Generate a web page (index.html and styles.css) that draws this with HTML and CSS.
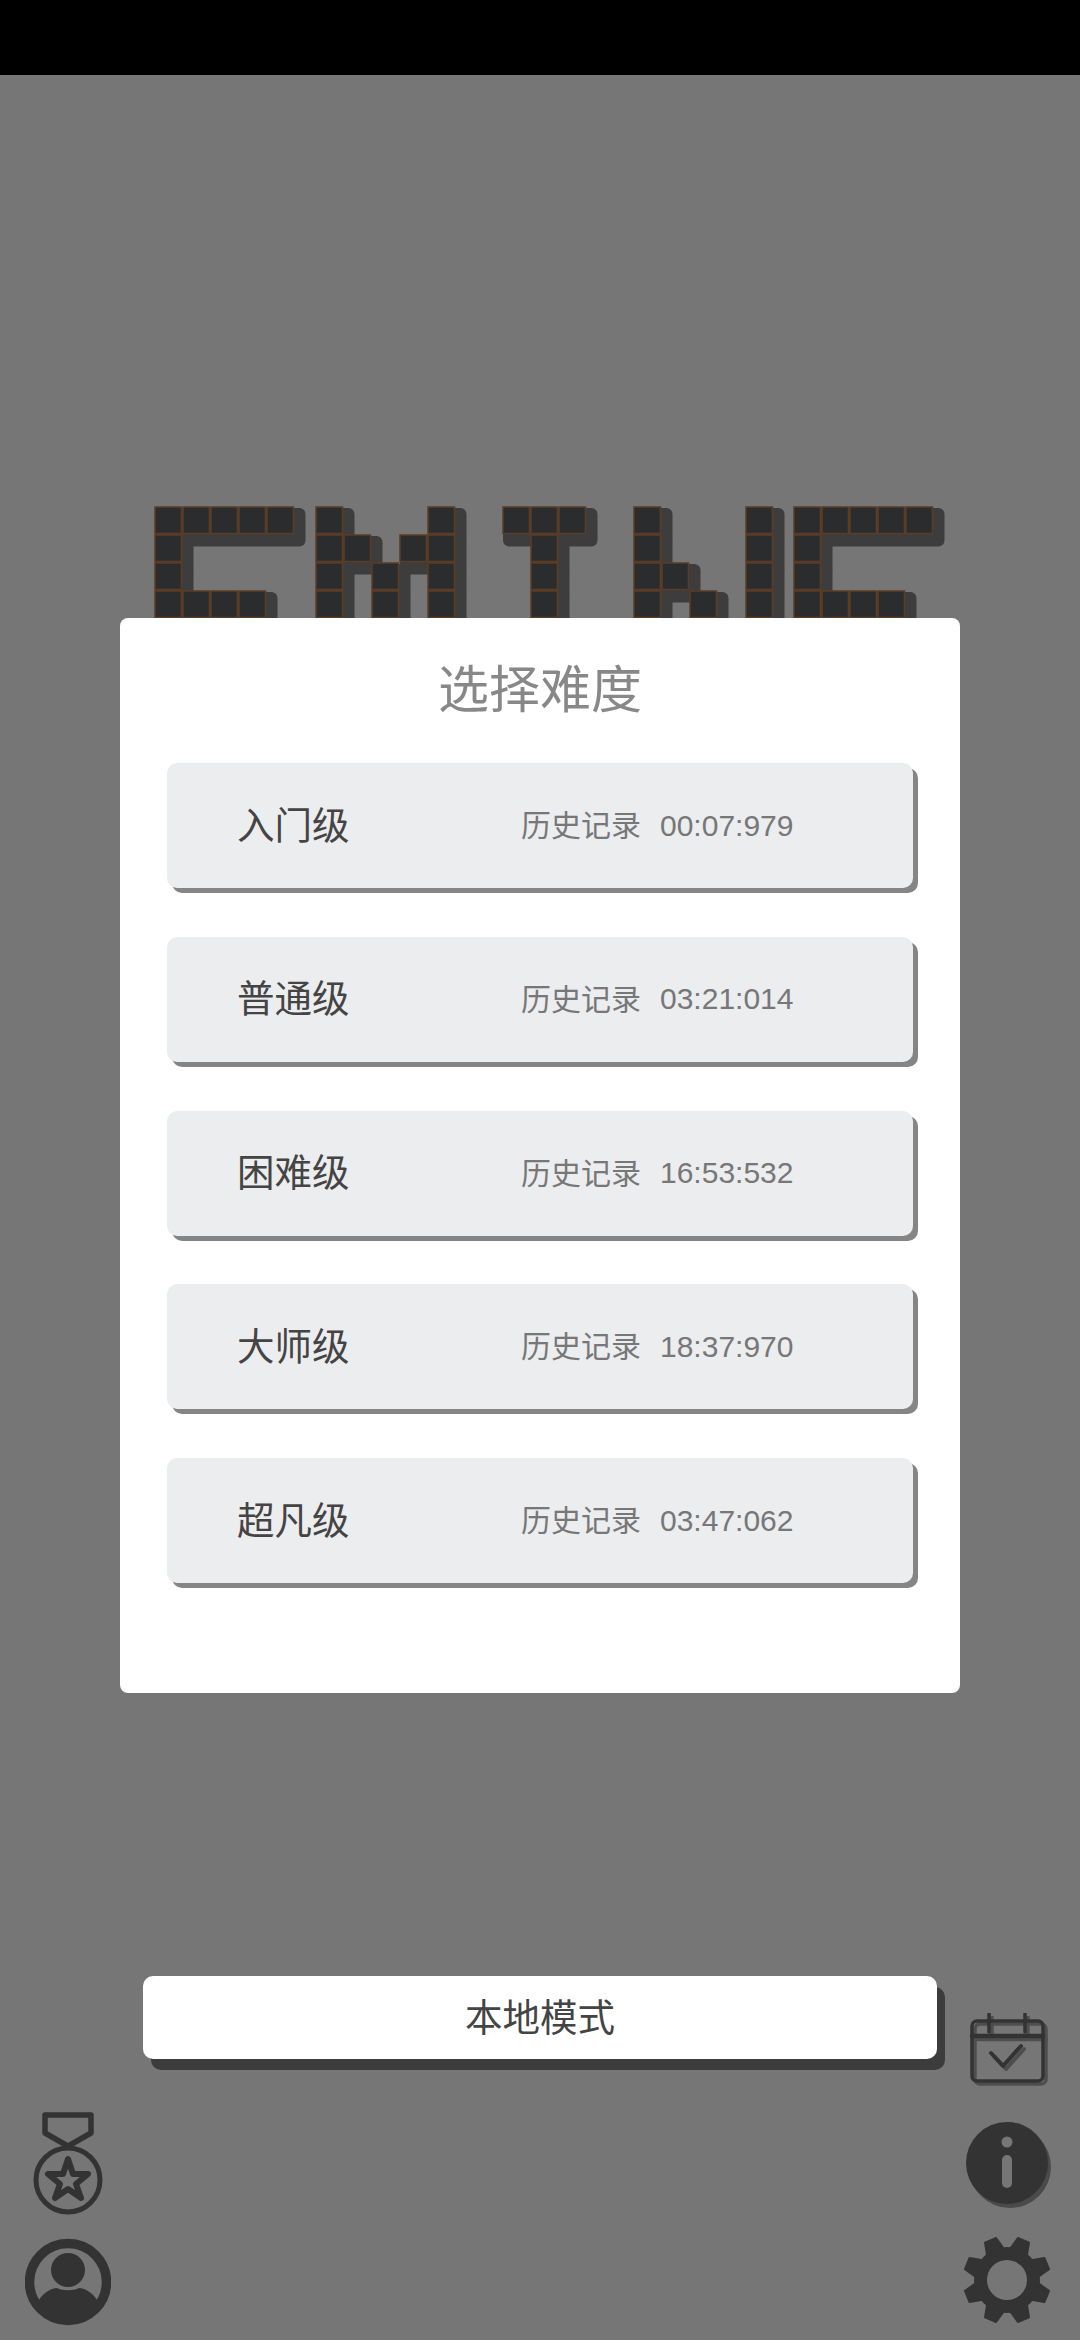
FILE: index.html
```html
<!DOCTYPE html>
<html lang="zh-CN">
<head>
    <meta charset="UTF-8">
    <meta name="viewport" content="width=device-width, initial-scale=1.0">
    <title>选择难度</title>
    <link rel="stylesheet" href="styles.css">
</head>
<body>
    <div class="status-bar"></div>

    <!-- game logo, made of tiles; the dialog covers its lower part -->
    <div class="logo-area">
        <svg class="logo" width="1080" height="120" viewBox="0 0 1080 120">
            <defs>
                <rect id="tile" width="26.5" height="26.5"/>
                <g id="tiles">
                    <use href="#tile" x="155" y="1"/><use href="#tile" x="183" y="1"/><use href="#tile" x="211" y="1"/><use href="#tile" x="239" y="1"/><use href="#tile" x="267" y="1"/>
                    <use href="#tile" x="155" y="29"/><use href="#tile" x="155" y="57"/>
                    <use href="#tile" x="155" y="85"/><use href="#tile" x="183" y="85"/><use href="#tile" x="211" y="85"/><use href="#tile" x="239" y="85"/>

                    <use href="#tile" x="316" y="1"/><use href="#tile" x="316" y="29"/><use href="#tile" x="316" y="57"/><use href="#tile" x="316" y="85"/>
                    <use href="#tile" x="344" y="29"/>
                    <use href="#tile" x="372" y="57"/><use href="#tile" x="372" y="85"/>
                    <use href="#tile" x="400" y="29"/>
                    <use href="#tile" x="428" y="1"/><use href="#tile" x="428" y="29"/><use href="#tile" x="428" y="57"/><use href="#tile" x="428" y="85"/>

                    <use href="#tile" x="503" y="1"/><use href="#tile" x="531" y="1"/><use href="#tile" x="559" y="1"/>
                    <use href="#tile" x="531" y="29"/><use href="#tile" x="531" y="57"/><use href="#tile" x="531" y="85"/>

                    <use href="#tile" x="634" y="1"/><use href="#tile" x="634" y="29"/><use href="#tile" x="634" y="57"/><use href="#tile" x="634" y="85"/>
                    <use href="#tile" x="662" y="57"/><use href="#tile" x="690" y="85"/>

                    <use href="#tile" x="746" y="1"/><use href="#tile" x="746" y="29"/><use href="#tile" x="746" y="57"/><use href="#tile" x="746" y="85"/>

                    <use href="#tile" x="794" y="1"/><use href="#tile" x="822" y="1"/><use href="#tile" x="850" y="1"/><use href="#tile" x="878" y="1"/><use href="#tile" x="906" y="1"/>
                    <use href="#tile" x="794" y="29"/><use href="#tile" x="794" y="57"/>
                    <use href="#tile" x="794" y="85"/><use href="#tile" x="822" y="85"/><use href="#tile" x="850" y="85"/><use href="#tile" x="878" y="85"/>
                </g>
            </defs>
            <use href="#tiles" class="logo-shadow" transform="translate(6 7)"/>
            <use href="#tiles" class="logo-tile"/>
        </svg>
    </div>

    <div class="modal">
        <h2 class="modal-title">选择难度</h2>
        <div class="level-list">
            <div class="level-row">
                <span class="level-name">入门级</span>
                <span class="level-history">历史记录</span>
                <span class="level-time">00:07:979</span>
            </div>
            <div class="level-row">
                <span class="level-name">普通级</span>
                <span class="level-history">历史记录</span>
                <span class="level-time">03:21:014</span>
            </div>
            <div class="level-row">
                <span class="level-name">困难级</span>
                <span class="level-history">历史记录</span>
                <span class="level-time">16:53:532</span>
            </div>
            <div class="level-row">
                <span class="level-name">大师级</span>
                <span class="level-history">历史记录</span>
                <span class="level-time">18:37:970</span>
            </div>
            <div class="level-row">
                <span class="level-name">超凡级</span>
                <span class="level-history">历史记录</span>
                <span class="level-time">03:47:062</span>
            </div>
        </div>
    </div>

    <div class="footer">
        <div class="footer-left">
            <!-- medal -->
            <svg class="icon-medal" width="70" height="104" viewBox="0 0 70 104">
                <path d="M33 33 L12 21 V3 H58 V21 L37 33" class="line-icon" stroke-width="5.5"/>
                <circle cx="35" cy="68" r="32" class="line-icon" stroke-width="5"/>
                <path d="M35 47 L40 62 L55 62 L43 72 L48 86 L35 77 L22 86 L27 72 L15 62 L30 62 Z" class="line-icon" stroke-width="6"/>
            </svg>
            <!-- profile -->
            <svg class="icon-user" width="86" height="88" viewBox="0 0 86 88">
                <circle cx="43" cy="44" r="38.5" class="line-icon" stroke-width="9.5"/>
                <circle cx="43" cy="32" r="17" class="solid-icon"/>
                <path d="M14 62 C18 55 26 50 32 50 C37 53 49 53 54 50 C60 50 68 55 72 62 A34 34 0 0 1 14 62 Z" class="solid-icon"/>
            </svg>
        </div>

        <button class="local-btn">本地模式</button>

        <div class="footer-right">
            <!-- calendar -->
            <svg class="icon-calendar" width="80" height="76" viewBox="0 0 80 76">
                <rect x="3" y="8" width="71" height="60" rx="5" class="line-icon" stroke-width="3.5"/>
                <path d="M3 23 H74" class="line-icon" stroke-width="4.5"/>
                <path d="M20 1 V19 M56 1 V19" class="line-icon" stroke-width="3.5"/>
                <path d="M22 40 L34 53 L52 33" class="line-icon" stroke-width="4"/>
            </svg>
            <!-- info -->
            <svg class="icon-info" width="90" height="88" viewBox="0 0 90 88">
                <circle cx="42" cy="41" r="41" class="solid-icon"/>
                <circle cx="42" cy="20" r="5.5" class="icon-cut"/>
                <rect x="37" y="33" width="10" height="33" rx="5" class="icon-cut"/>
            </svg>
            <!-- settings -->
            <svg class="icon-gear" width="90" height="90" viewBox="-45 -45 90 90">
                <defs>
                    <path id="gear-tooth" d="M-9 -30 L-6 -43 L6 -43 L9 -30 Z" class="gear-tooth"/>
                </defs>
                <circle r="33" class="solid-icon"/>
                <use href="#gear-tooth" transform="rotate(22.5)"/>
                <use href="#gear-tooth" transform="rotate(67.5)"/>
                <use href="#gear-tooth" transform="rotate(112.5)"/>
                <use href="#gear-tooth" transform="rotate(157.5)"/>
                <use href="#gear-tooth" transform="rotate(202.5)"/>
                <use href="#gear-tooth" transform="rotate(247.5)"/>
                <use href="#gear-tooth" transform="rotate(292.5)"/>
                <use href="#gear-tooth" transform="rotate(337.5)"/>
                <circle r="20" class="icon-cut"/>
            </svg>
        </div>
    </div>
</body>
</html>
```

FILE: styles.css
```css
body {
    font-family: "Liberation Sans", "Noto Sans CJK SC", sans-serif;
    background-color: #767676;
    margin: 0;
    height: 2340px;
    overflow: hidden;
    display: flex;
    flex-direction: column;
}

.status-bar {
    height: 75px;
    background-color: #000;
}

/* logo */
.logo-area {
    flex: 1;
    padding-top: 431px;
}

.logo {
    display: block;
}

.logo-shadow {
    fill: #3d3d3d;
    stroke: #3d3d3d;
    stroke-width: 12px;
    stroke-linejoin: round;
}

.logo-tile {
    fill: #2b2c2e;
    stroke: #5c3d24;
    stroke-width: 1.5px;
}

/* dialog */
.modal {
    position: absolute;
    top: 618px;
    left: 120px;
    width: 840px;
    height: 1075px;
    background-color: #fff;
    border-radius: 8px;
    padding: 0 47px;
    box-sizing: border-box;
}

.modal-title {
    margin: 0;
    height: 145px;
    padding-top: 41px;
    box-sizing: border-box;
    line-height: 64px;
    font-size: 51px;
    font-weight: 400;
    text-align: center;
    color: #888;
}

.level-list {
    display: flex;
    flex-direction: column;
    gap: 48.75px;
}

.level-row {
    height: 125px;
    display: flex;
    align-items: center;
    padding-left: 70px;
    background-color: #ecedef;
    border-radius: 10px;
    box-shadow: 5px 5px 0 #858585;
}

.level-name {
    width: 284px;
    padding-bottom: 7px;
    font-size: 37.5px;
    color: #444;
}

.level-history {
    width: 139px;
    padding-bottom: 5px;
    font-size: 30px;
    color: #777;
}

.level-time {
    font-size: 30px;
    color: #777;
}

/* bottom area */
.footer {
    height: 364px;
    display: grid;
    grid-template-columns: 143px 794px 143px;
    align-items: start;
}

.local-btn {
    height: 83px;
    padding: 0 0 7px;
    border: none;
    border-radius: 10px;
    background-color: #fff;
    box-shadow: 8px 11px 0 #3c3c3c;
    font-family: inherit;
    font-size: 37.5px;
    color: #444;
}

.footer-left {
    display: flex;
    flex-direction: column;
    padding: 136px 0 0 25px;
}

.footer-right {
    display: flex;
    flex-direction: column;
    padding: 37px 0 0 32px;
}

.icon-medal {
    display: block;
    margin: 0 0 22px 8px;
}

.icon-user {
    display: block;
}

.icon-calendar {
    display: block;
    margin: 0 0 33px 0;
    filter: drop-shadow(3px 3px 0 #4e4e4e);
}

.icon-info {
    display: block;
    margin: 0 0 25px -4px;
    filter: drop-shadow(3px 4px 0 #4a4a4a);
}

.icon-gear {
    display: block;
    margin-left: -7px;
}

.line-icon {
    fill: none;
    stroke: #333;
    stroke-linejoin: round;
    stroke-linecap: round;
}

.solid-icon {
    fill: #333;
}

.gear-tooth {
    fill: #333;
    stroke: #333;
    stroke-width: 2px;
    stroke-linejoin: round;
}

.icon-cut {
    fill: #767676;
}
```
